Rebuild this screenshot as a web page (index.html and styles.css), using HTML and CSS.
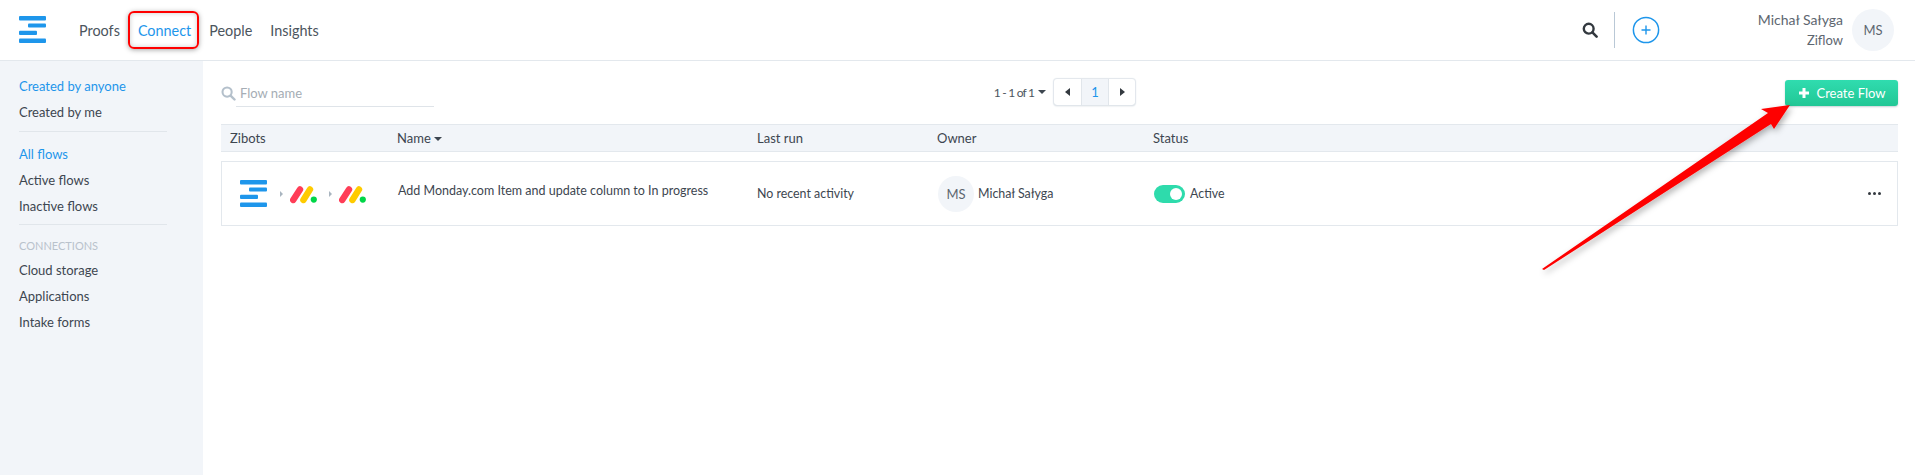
FILE: index.html
```html
<!DOCTYPE html>
<html>
    <head>
        <meta charset="UTF-8">
        <title>Connect</title>
        <link rel="stylesheet" href="styles.css">
    </head>
    <body>
        <svg width="0" height="0" class="defs">
            <symbol id="logo" viewBox="0 0 27 27">
                <rect x="0" y="0" width="27" height="4.5" rx="1" fill="#1e96eb"/>
                <rect x="9" y="7.4" width="18" height="4.2" rx="1" fill="#1e96eb"/>
                <rect x="0" y="14.8" width="18" height="4.3" rx="1" fill="#1e96eb"/>
                <rect x="0" y="22.4" width="27" height="4.6" rx="1" fill="#1e96eb"/>
            </symbol>
            <symbol id="monday" viewBox="0 0 27 18">
                <line x1="3.2" y1="14" x2="10" y2="3.4" stroke="#ff3d57" stroke-width="6.4" stroke-linecap="round"/>
                <line x1="13.4" y1="14" x2="20" y2="3.4" stroke="#ffcb00" stroke-width="6.4" stroke-linecap="round"/>
                <circle cx="23.8" cy="13.6" r="3.1" fill="#00d647"/>
            </symbol>
        </svg>

        <header class="topbar">
            <svg class="top-logo"><use href="#logo"/></svg>
            <nav class="main-nav">
                <a>Proofs</a>
                <a class="current">Connect</a>
                <a>People</a>
                <a>Insights</a>
            </nav>
            <div class="top-tools">
                <svg class="top-search" viewBox="0 0 16 16">
                    <circle cx="6.7" cy="6.7" r="4.9" fill="none" stroke="#33393f" stroke-width="2.4"/>
                    <line x1="10.4" y1="10.4" x2="14.6" y2="14.6" stroke="#33393f" stroke-width="2.6" stroke-linecap="round"/>
                </svg>
                <span class="top-divider"></span>
                <svg class="top-plus" viewBox="0 0 28 28">
                    <circle cx="14" cy="14" r="12.6" fill="none" stroke="#1e96eb" stroke-width="1.5"/>
                    <path d="M14 9.5v9M9.5 14h9" stroke="#1e96eb" stroke-width="1.4"/>
                </svg>
            </div>
            <div class="user">
                <div class="user-text">
                    <div class="user-name">Michał Sałyga</div>
                    <div class="user-org">Ziflow</div>
                </div>
                <div class="avatar avatar-big">MS</div>
            </div>
        </header>

        <div class="page">
            <aside class="sidebar">
                <a class="active">Created by anyone</a>
                <a>Created by me</a>
                <hr>
                <a class="active">All flows</a>
                <a>Active flows</a>
                <a>Inactive flows</a>
                <hr class="side-rule-last">
                <div class="side-title">CONNECTIONS</div>
                <a>Cloud storage</a>
                <a>Applications</a>
                <a>Intake forms</a>
            </aside>

            <main class="content">
                <div class="toolbar">
                    <div class="flow-search">
                        <svg class="flow-search-icon" viewBox="0 0 16 16">
                            <circle cx="6.5" cy="6.5" r="4.9" fill="none" stroke="#b4c0cb" stroke-width="2.2"/>
                            <line x1="10.2" y1="10.2" x2="14.4" y2="14.4" stroke="#b4c0cb" stroke-width="2.6" stroke-linecap="round"/>
                        </svg>
                        <span class="flow-search-text">Flow name</span>
                    </div>
                    <div class="paging">
                        <span class="paging-count">1 - 1 of 1</span>
                        <span class="caret"></span>
                        <div class="pager">
                            <span class="pager-cell"><i class="tri-left"></i></span>
                            <span class="pager-cell pager-on">1</span>
                            <span class="pager-cell"><i class="tri-right"></i></span>
                        </div>
                    </div>
                    <button class="create-btn">
                        <svg class="create-plus" viewBox="0 0 12 12"><path d="M6 1v10M1 6h10" stroke="#fff" stroke-width="3"/></svg>
                        Create Flow
                    </button>
                </div>

                <div class="cols table-head">
                    <div>Zibots</div>
                    <div>Name <span class="caret"></span></div>
                    <div>Last run</div>
                    <div>Owner</div>
                    <div>Status</div>
                </div>

                <div class="cols flow-row">
                    <div class="zibots">
                        <svg class="zibot-logo"><use href="#logo"/></svg>
                        <i class="step"></i>
                        <svg class="zibot-app"><use href="#monday"/></svg>
                        <i class="step"></i>
                        <svg class="zibot-app"><use href="#monday"/></svg>
                    </div>
                    <div class="flow-name">Add Monday.com Item and update column to In progress</div>
                    <div class="flow-run">No recent activity</div>
                    <div class="owner">
                        <div class="avatar avatar-small">MS</div>
                        <span>Michał Sałyga</span>
                    </div>
                    <div class="status">
                        <span class="toggle"><i></i></span>
                        <span>Active</span>
                    </div>
                    <div class="more"><i></i><i></i><i></i></div>
                </div>
            </main>
        </div>

        <!-- annotations drawn on top of the screenshot -->
        <div class="mark-connect"></div>
        <svg class="mark-arrow" width="1915" height="475" viewBox="0 0 1915 475">
            <defs>
                <filter id="arrow-shadow" x="-10%" y="-10%" width="130%" height="130%">
                    <feDropShadow dx="2" dy="3" stdDeviation="3" flood-color="#000" flood-opacity="0.3"/>
                </filter>
            </defs>
            <polygon points="1542,269 1768,113 1761,109 1790,105 1774,129 1771,124 1544,270" fill="#fe0000" filter="url(#arrow-shadow)"/>
        </svg>
    </body>
</html>
```

FILE: styles.css
```css
html, body {
    margin: 0;
    height: 100%;
    overflow: hidden;
    background: white;
    font-family: "Lato", "Liberation Sans", sans-serif;
    font-size: 13px;
    color: #3d4650;
}

.defs {
    position: absolute;
}

/* top bar */
.topbar {
    display: flex;
    align-items: center;
    height: 60px;
    border-bottom: 1px solid #e3e8ed;
    padding: 0 21px 0 19px;
}
.top-logo {
    width: 27px;
    height: 27px;
    margin-top: -1px;
}
.main-nav {
    display: flex;
    margin-left: 33px;
    flex: 1;
    font-size: 14.4px;
    color: #4c555e;
}
.main-nav a {
    margin-right: 18px;
}
.main-nav .current {
    color: #1e96eb;
}
.top-tools {
    display: flex;
    align-items: center;
    margin-right: 98px;
}
.top-search {
    width: 16px;
    height: 16px;
}
.top-divider {
    width: 1px;
    height: 36px;
    background: #b9c8d6;
    margin: 0 17px 0 16px;
}
.top-plus {
    width: 28px;
    height: 28px;
}
.user {
    display: flex;
    align-items: center;
}
.user-text {
    text-align: right;
    margin-right: 9px;
    color: #5d6670;
}
.user-name {
    font-size: 14px;
    line-height: 20px;
}
.user-org {
    font-size: 13px;
    line-height: 20px;
}
.avatar {
    display: flex;
    align-items: center;
    justify-content: center;
    border-radius: 50%;
    background: #f2f5f9;
    color: #5d6670;
}
.avatar-big {
    width: 42px;
    height: 42px;
    font-size: 13px;
}
.avatar-small {
    width: 36px;
    height: 36px;
    font-size: 13px;
}

/* page */
.page {
    display: flex;
    height: 414px;
}
.sidebar {
    width: 184px;
    padding: 12px 0 0 19px;
    background: #f2f5f9;
}
.sidebar a {
    display: block;
    line-height: 26px;
    width: 148px;
}
.sidebar .active {
    color: #1e96eb;
}
.sidebar hr {
    width: 148px;
    margin: 6px 0 9px;
    border: 0;
    border-top: 1px solid #e1e6eb;
}
.sidebar .side-rule-last {
    margin: 5px 0 12px;
}
.side-title {
    font-size: 11px;
    line-height: 18px;
    color: #b9c2cc;
    height: 20px;
}
.content {
    flex: 1;
    padding: 18px 17px 0 18px;
}

/* toolbar */
.toolbar {
    display: flex;
    align-items: flex-start;
    justify-content: space-between;
    height: 45px;
}
.flow-search {
    display: flex;
    align-items: center;
    width: 213px;
    margin-top: 5px;
}
.flow-search-icon {
    width: 15px;
    height: 15px;
    flex: none;
}
.flow-search-text {
    flex: 1;
    padding: 0 0 4px 4px;
    border-bottom: 1px solid #dfe4e9;
    margin-bottom: -5px;
    color: #a5adb5;
    line-height: 18px;
}
.paging {
    display: flex;
    align-items: center;
    margin-right: 90px;
    color: #4c555e;
}
.paging-count {
    margin-right: 4px;
    font-size: 12px;
    letter-spacing: -0.8px;
}
.caret {
    display: inline-block;
    width: 0;
    height: 0;
    border-left: 4px solid transparent;
    border-right: 4px solid transparent;
    border-top: 4px solid #3d4650;
    vertical-align: 2px;
}
.pager {
    display: flex;
    margin-left: 8px;
    border-radius: 3px;
    box-shadow: 0 0 1px 1px #e1e6eb, 0 1px 2px #d3d9df;
}
.pager-cell {
    display: flex;
    align-items: center;
    justify-content: center;
    width: 27px;
    height: 26px;
    border-left: 1px solid #e1e6eb;
    box-sizing: border-box;
}
.pager-cell:first-child {
    border-left: 0;
}
.pager-on {
    background: #f2f5f9;
    color: #1e96eb;
}
.tri-left, .tri-right {
    width: 0;
    height: 0;
    border-top: 4px solid transparent;
    border-bottom: 4px solid transparent;
}
.tri-left {
    border-right: 5px solid #33393f;
}
.tri-right {
    border-left: 5px solid #33393f;
}
.create-btn {
    display: flex;
    align-items: center;
    justify-content: center;
    width: 113px;
    height: 26px;
    margin-top: 1px;
    padding: 0;
    border: 0;
    border-radius: 3px;
    background: linear-gradient(#30dcaf, #21c795);
    box-shadow: 0 1px 2px #c6d0d6;
    color: white;
    font: inherit;
}
.create-plus {
    width: 12px;
    height: 12px;
    margin-right: 7px;
}

/* table */
.cols {
    display: grid;
    grid-template-columns: 176px 360px 180px 216px 1fr auto;
    align-items: center;
}
.table-head {
    height: 26px;
    border-top: 1px solid #e3e8ed;
    border-bottom: 1px solid #e3e8ed;
    background: #f2f5f9;
}
.table-head > div:first-child {
    padding-left: 9px;
}
.flow-row {
    height: 63px;
    margin-top: 9px;
    border: 1px solid #e3e8ed;
    grid-template-columns: 175px 360px 180px 216px 1fr auto;
    font-size: 12.4px;
}
.zibots {
    display: flex;
    align-items: center;
    padding-left: 18px;
}
.zibot-logo {
    width: 27px;
    height: 27px;
}
.zibot-app {
    width: 27px;
    height: 18px;
    margin-top: 3px;
}
.step {
    width: 0;
    height: 0;
    margin: 0 7px 0 13px;
    border-top: 3.5px solid transparent;
    border-bottom: 3.5px solid transparent;
    border-left: 3px solid #a9b5c0;
}
.step ~ .step {
    margin-left: 12px;
}
.flow-name {
    margin-top: -6px;
    padding-left: 1px;
    font-size: 12.5px;
}
.flow-run {
    margin-top: -1px;
}
.owner {
    display: flex;
    align-items: center;
    padding-left: 1px;
}
.owner span {
    margin-left: 4px;
}
.status {
    display: flex;
    align-items: center;
    padding-left: 1px;
}
.toggle {
    display: flex;
    align-items: center;
    justify-content: flex-end;
    width: 31px;
    height: 18px;
    margin-right: 5px;
    padding-right: 3px;
    box-sizing: border-box;
    border-radius: 9px;
    background: #2edbac;
}
.toggle i {
    width: 12px;
    height: 12px;
    border-radius: 50%;
    background: white;
}
.more {
    display: flex;
    gap: 2px;
    margin-right: 16px;
}
.more i {
    width: 3px;
    height: 3px;
    border-radius: 50%;
    background: #33393f;
}

/* annotations */
.mark-connect {
    position: absolute;
    left: 128px;
    top: 11px;
    width: 67px;
    height: 34px;
    border: 2px solid #f00;
    border-radius: 6px;
    box-shadow: 0 1px 5px rgba(0, 0, 0, 0.35), inset 0 0 5px rgba(0, 0, 0, 0.2);
}
.mark-arrow {
    position: absolute;
    left: 0;
    top: 0;
    pointer-events: none;
}
```
